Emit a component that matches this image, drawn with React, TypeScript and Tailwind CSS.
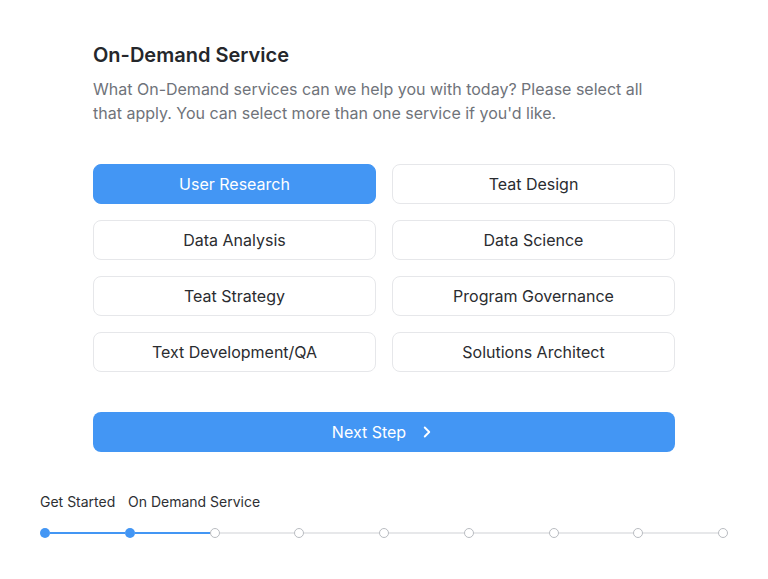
import { ChevronRight } from 'lucide-react'

const services = [
  'User Research',
  'Teat Design',
  'Data Analysis',
  'Data Science',
  'Teat Strategy',
  'Program Governance',
  'Text Development/QA',
  'Solutions Architect',
]

const selected = ['User Research']

// 9 steps, first two done
const totalSteps = 9
const doneSteps = 2

export default function App() {
  return (
    <div className="w-[768px] h-[579px] bg-white font-['Inter',sans-serif] overflow-hidden">
      <div className="w-[582px] ml-[93px] pt-[41px]">
        <h1 className="text-[20px] leading-7 font-semibold text-[#25272b]">On-Demand Service</h1>
        <p className="mt-2 w-[560px] text-base leading-6 text-[#6f737a]">
          What On-Demand services can we help you with today? Please select all that apply. You can select more than one service if you'd like.
        </p>

        <div className="mt-[39px] grid grid-cols-2 gap-4">
          {services.map(s => {
            const on = selected.includes(s)
            return (
              <button
                key={s}
                className={
                  on
                    ? 'h-10 rounded-lg bg-[#4396f4] border border-[#4396f4] text-white text-base'
                    : 'h-10 rounded-lg bg-white border border-[#e6e7ea] text-[#2a2c30] text-base'
                }
              >
                {s}
              </button>
            )
          })}
        </div>

        <button className="mt-10 h-10 w-full rounded-lg bg-[#4396f4] text-white text-base flex items-center justify-center gap-3">
          <span>Next Step</span>
          <ChevronRight size={18} strokeWidth={2.5} />
        </button>
      </div>

      {/* progress */}
      <div className="px-10 mt-10">
        <div className="flex text-sm leading-5 text-[#2e3034]">
          <span className="w-[88px]">Get Started</span>
          <span>On Demand Service</span>
        </div>
        <div className="mt-4 flex items-center">
          {Array.from({ length: totalSteps }).map((_, i) => (
            <div key={i} className={i === totalSteps - 1 ? 'flex items-center' : 'flex items-center flex-1'}>
              {i < doneSteps ? (
                <div className="w-[10px] h-[10px] rounded-full bg-[#4396f4] shrink-0" />
              ) : (
                <div className="w-[10px] h-[10px] rounded-full bg-white border border-[#b9bcc1] shrink-0" />
              )}
              {i < totalSteps - 1 && (
                <div className={i < doneSteps ? 'flex-1 h-[2px] bg-[#4396f4]' : 'flex-1 h-[2px] bg-[#e7e8ea]'} />
              )}
            </div>
          ))}
        </div>
      </div>
    </div>
  )
}
